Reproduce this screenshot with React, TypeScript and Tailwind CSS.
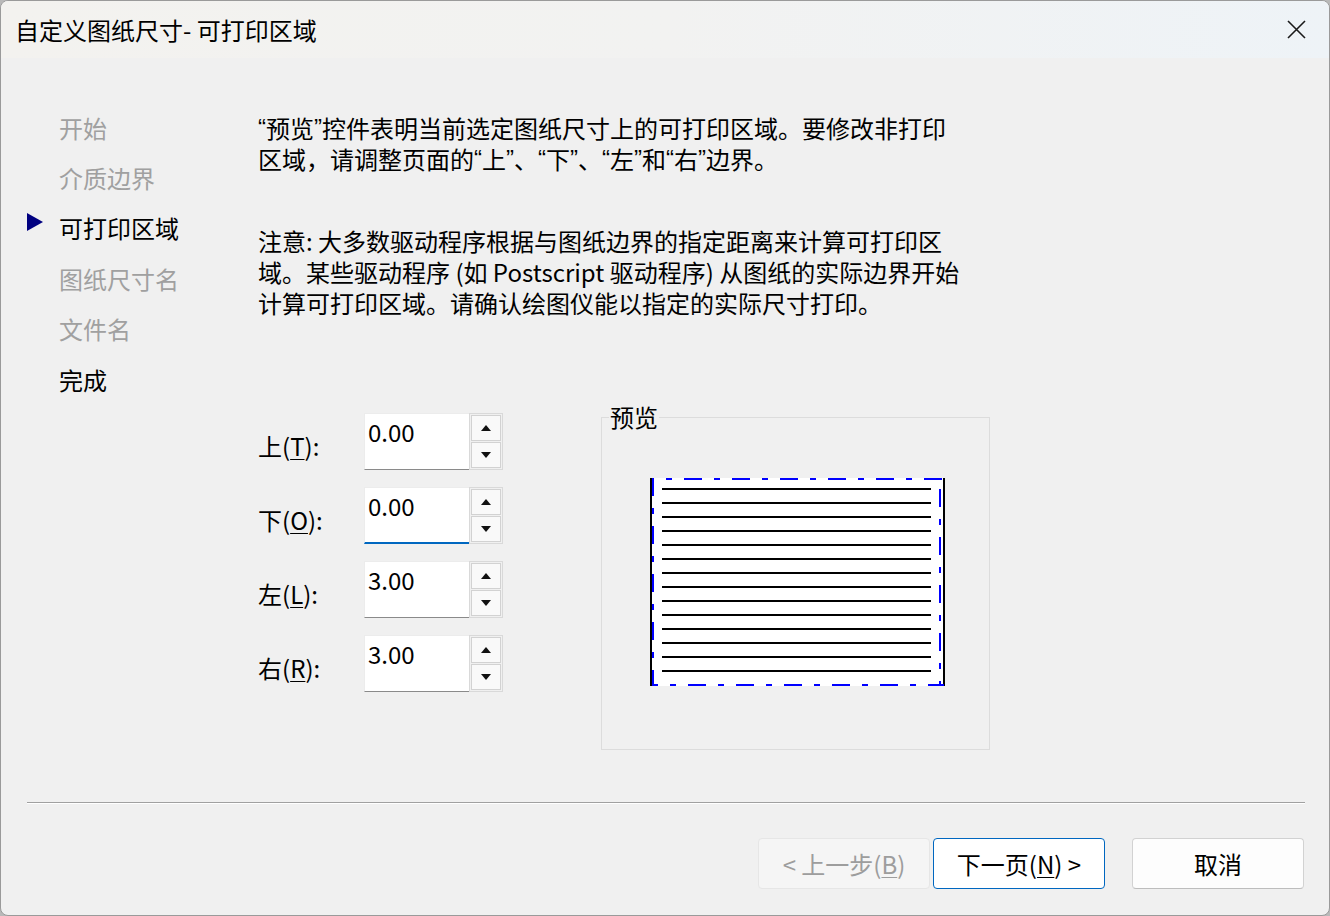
import React from "react";

const steps = [
  { name: "开始", state: "off" },
  { name: "介质边界", state: "off" },
  { name: "可打印区域", state: "current" },
  { name: "图纸尺寸名", state: "off" },
  { name: "文件名", state: "off" },
  { name: "完成", state: "on" },
];

const fields = [
  { label: "上", key: "T", value: "0.00", focused: false },
  { label: "下", key: "O", value: "0.00", focused: true },
  { label: "左", key: "L", value: "3.00", focused: false },
  { label: "右", key: "R", value: "3.00", focused: false },
];

// narrow (latin) curly quotes, as the system font renders them
function Q({ children }: { children: React.ReactNode }) {
  return (
    <>
      <span className="font-['Liberation_Sans'] align-top leading-[31px]">“</span>
      {children}
      <span className="font-['Liberation_Sans'] align-top leading-[31px]">”</span>
    </>
  );
}

function Arrow({ up }: { up: boolean }) {
  return (
    <svg width="10" height="6" viewBox="0 0 10 6">
      {up ? <polygon points="5,0 10,6 0,6" fill="#111" /> : <polygon points="0,0 10,0 5,6" fill="#111" />}
    </svg>
  );
}

function SpinField({ label, hotkey, value, focused }: { label: string; hotkey: string; value: string; focused: boolean }) {
  return (
    <div className="flex h-[57px]">
      <div className="w-[106px] flex items-center pt-[8px] text-[24px] leading-[31px]">
        {label}(<span className="underline underline-offset-[3px] decoration-1">{hotkey}</span>):
      </div>
      {/* edit box */}
      <div
        className={`w-[105px] h-full bg-white border-t border-l border-[#ececec] pl-[3px] pt-[2px] text-[24px] leading-[31px] ${
          focused ? "border-b-2 border-b-[#0067c0]" : "border-b border-b-[#8a8a8a]"
        }`}
      >
        {value}
      </div>
      {/* spinner */}
      <div className="w-[34px] h-full flex flex-col gap-px border border-[#d9d9d9] p-px bg-[#f0f0f0]">
        <div className="flex-1 flex items-center justify-center bg-[#f9f9f9] border border-[#d2d2d2]">
          <Arrow up />
        </div>
        <div className="flex-1 flex items-center justify-center bg-[#f9f9f9] border border-[#d2d2d2]">
          <Arrow up={false} />
        </div>
      </div>
    </div>
  );
}

function PagePreview() {
  const lines = Array.from({ length: 14 }, (_, i) => 10 + i * 14);
  return (
    <svg width="295" height="208" viewBox="0 0 295 208">
      <rect x="0" y="0" width="295" height="208" fill="#fff" />
      {lines.map((y) => (
        <rect key={y} x="12" y={y} width="269" height="2" fill="#000" />
      ))}
      <rect x="0" y="0" width="2" height="208" fill="#000" />
      <rect x="293" y="0" width="2" height="208" fill="#000" />
      <g stroke="#0000ff" strokeWidth="2" strokeDasharray="18 12 6 12" fill="none">
        <line x1="2" y1="1" x2="294" y2="1" strokeDashoffset="16" />
        <line x1="2" y1="207" x2="294" y2="207" strokeDashoffset="12" />
        <line x1="3" y1="0" x2="3" y2="208" strokeDashoffset="0" />
        <line x1="290" y1="0" x2="290" y2="208" strokeDashoffset="37" />
      </g>
    </svg>
  );
}

export default function App() {
  return (
    <div className="w-[1330px] h-[916px] bg-[#b9b9b9] font-['Noto_Sans_CJK_SC',sans-serif] text-black">
      <div className="h-full flex flex-col border border-[#9a9a9a] rounded-[8px] overflow-hidden bg-[#f0f0f0]">
        {/* Title bar */}
        <div className="h-[57px] shrink-0 flex items-center justify-between pl-[14px] pr-[23px] bg-gradient-to-r from-[#f3f2ef] via-[#f2f2f1] to-[#eef3f7]">
          <span className="text-[24px] leading-[30px]">自定义图纸尺寸- 可打印区域</span>
          <svg width="19" height="19" viewBox="0 0 19 19">
            <path d="M1 1 L18 18 M18 1 L1 18" stroke="#1a1a1a" strokeWidth="1.6" />
          </svg>
        </div>

        {/* Main */}
        <div className="flex-1 flex">
          {/* Steps */}
          <div className="w-[257px] shrink-0 pl-[26px] pt-[44px]">
            {steps.map((s) => (
              <div key={s.name} className="h-[50.4px] flex items-center">
                <div className="w-[32px] flex items-center pb-[12px]">
                  {s.state === "current" && (
                    <svg width="16" height="18" viewBox="0 0 16 18">
                      <polygon points="0,0 16,9 0,18" fill="#000080" />
                    </svg>
                  )}
                </div>
                <span className={`text-[24px] leading-[31px] ${s.state === "off" ? "text-[#a0a0a0]" : "text-black"}`}>
                  {s.name}
                </span>
              </div>
            ))}
          </div>

          {/* Content */}
          <div className="flex-1 pt-[54px] text-[24px] leading-[31px]">
            <p>
              <Q>预览</Q>控件表明当前选定图纸尺寸上的可打印区域。要修改非打印
              <br />
              区域，请调整页面的<Q>上</Q>、<Q>下</Q>、<Q>左</Q>和<Q>右</Q>边界。
            </p>
            <p className="mt-[51px]">
              注意: 大多数驱动程序根据与图纸边界的指定距离来计算可打印区
              <br />
              域。某些驱动程序 (如 Postscript 驱动程序) 从图纸的实际边界开始
              <br />
              计算可打印区域。请确认绘图仪能以指定的实际尺寸打印。
            </p>

            <div className="mt-[95px] flex items-start">
              <div className="flex flex-col gap-[17px]">
                {fields.map((f) => (
                  <SpinField key={f.key} label={f.label} hotkey={f.key} value={f.value} focused={f.focused} />
                ))}
              </div>

              <div className="relative ml-[98px] mt-[4px] w-[389px] h-[333px] border border-[#dcdcdc]">
                <span className="absolute left-[7px] top-[-13px] px-px bg-[#f0f0f0] text-[24px] leading-[24px]">预览</span>
                <div className="ml-[48px] mt-[60px]">
                  <PagePreview />
                </div>
              </div>
            </div>
          </div>
        </div>

        {/* Separator */}
        <div className="ml-[26px] mr-[24px] h-[2px] border-t border-[#a0a0a0] border-b border-b-white" />

        {/* Buttons */}
        <div className="h-[111px] shrink-0 flex items-start justify-end pt-[34px] pr-[25px] text-[24px]">
          <button className="w-[172px] h-[51px] rounded-[4px] bg-[#f5f5f5] border border-[#e6e6e6] text-[#9d9d9d]">
            &lt; 上一步(<span className="underline underline-offset-[3px] decoration-1">B</span>)
          </button>
          <button className="ml-[3px] w-[172px] h-[51px] rounded-[4px] bg-white border border-[#0067c0] text-black">
            下一页(<span className="underline underline-offset-[3px] decoration-1">N</span>) &gt;
          </button>
          <button className="ml-[27px] w-[172px] h-[51px] rounded-[4px] bg-[#fdfdfd] border border-[#d2d2d2] border-b-[#bdbdbd] text-black">
            取消
          </button>
        </div>
      </div>
    </div>
  );
}
